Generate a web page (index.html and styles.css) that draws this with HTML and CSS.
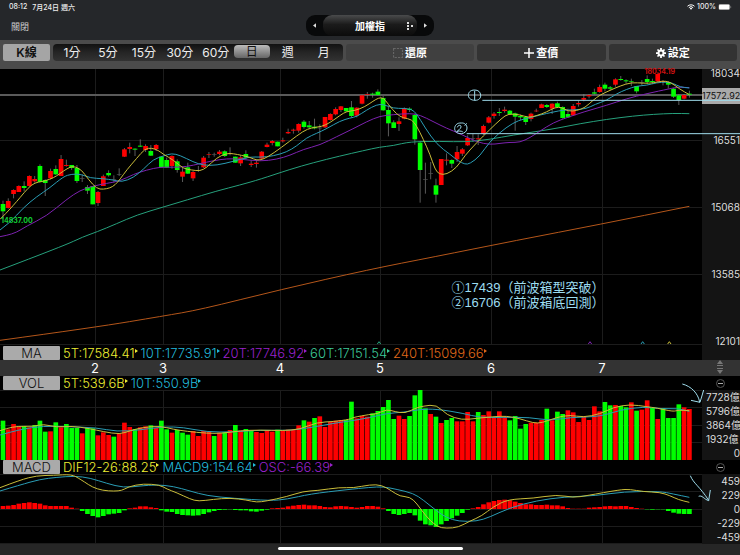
FILE: index.html
```html
<!DOCTYPE html>
<html lang="zh-Hant">
<head>
  <meta charset="UTF-8">
  <meta name="viewport" content="width=device-width, initial-scale=1.0">
  <title>加權指 K線</title>
  <link rel="stylesheet" href="styles.css">
</head>
<body>

  <!-- 狀態列 -->
  <div class="status-bar">
    <span>08:12</span>
    <span class="status-date">7月24日 週六</span>
    <svg class="wifi" viewBox="0 0 16 12"><path d="M1 4.5a10 10 0 0 1 14 0M3.7 7.3a6 6 0 0 1 8.6 0" fill="none" stroke="#fff" stroke-width="2"/><path d="M5.5 8.8a3.6 3.6 0 0 1 5 0L8 11.5z" fill="#fff"/></svg>
    <span>100%</span>
    <svg class="battery" viewBox="0 0 26 12"><rect x="0.5" y="0.5" width="22" height="11" rx="3" fill="none" stroke="#999"/><rect x="1" y="1" width="21" height="10" rx="2" fill="#fff"/><path d="M24 4v4q1.500-.5 1.500-2t-1.500-2" fill="#999"/></svg>
  </div>

  <!-- 標題 -->
  <header class="title-bar">
    <button class="close">關閉</button>
    <div class="picker">
      <button class="arrow" aria-label="上一檔"><svg viewBox="0 0 4 6"><path d="M4 0v6L0 3z"/></svg></button>
      <button class="symbol">加權指
        <svg viewBox="0 0 7 9"><path d="M0 0h2v2H0zM0 3h2v2H0zM0 6h2v2H0zM4 3h2v2H4z"/></svg>
      </button>
      <button class="arrow" aria-label="下一檔"><svg viewBox="0 0 4 6"><path d="M0 0v6l4-3z"/></svg></button>
    </div>
  </header>

  <!-- 工具列 -->
  <nav class="toolbar">
    <button class="kline">K線</button>
    <div class="periods">
      <button>1分</button>
      <button>5分</button>
      <button>15分</button>
      <button>30分</button>
      <button>60分</button>
      <button class="active">日</button>
      <button>週</button>
      <button>月</button>
    </div>
    <button class="tool dim"><svg viewBox="0 0 9 9"><path d="M.5.5h8v8h-8z" fill="none" stroke="#666" stroke-dasharray="2 1"/></svg>還原</button>
    <button class="tool"><svg viewBox="0 0 10 10"><path d="M5 0v10M0 5h10" stroke="#fff" stroke-width="1.500"/></svg>查價</button>
    <button class="tool"><svg viewBox="0 0 20 20"><circle cx="10" cy="10" r="5" fill="none" stroke="#fff" stroke-width="4"/><path d="M10 0v5M10 15v5M0 10h5M15 10h5M3 3l3.500 3.500M13.500 13.500L17 17M17 3l-3.500 3.500M6.500 13.500L3 17" stroke="#fff" stroke-width="3.500"/></svg>設定</button>
  </nav>

  <!-- K線圖 -->
  <section class="panel price">
    <div class="plot"><svg id="price-chart" viewBox="0 9 2106 828" preserveAspectRatio="none"></svg></div>
    <div class="axis">
      <span>18034</span><span>16551</span><span>15068</span><span>13585</span><span>12101</span>
    </div>
    <span class="low-label">14837.00</span>
    <span class="high-label">18034.19</span>
    <span class="last-price">17572.92</span>
    <svg class="drawing" viewBox="0 9 2220 828" preserveAspectRatio="none">
      <path d="M1447 103H2220M1400 203H2220"/>
      <path d="M1424 72c-14 0-19 8-19 16s8 15 20 15 18-7 17-16-7-15-18-15M1424 74v28"/>
      <path d="M1384 171c-14-1-20 8-20 17s9 16 20 15 17-8 17-17-7-16-17-15"/>
      <path d="M1372 184c2-8 12-8 11-1-1 6-9 10-13 14 6-3 13-2 18 0M1400 172l-6 7"/>
    </svg>
    <div class="note">①17439（前波箱型突破）<br>②16706（前波箱底回測）</div>
  </section>
  <div class="legend ma-legend">
    <button>MA</button>
    <span class="yellow">5T:17584.41</span>
    <span class="cyan">10T:17735.91</span>
    <span class="purple">20T:17746.92</span>
    <span class="green">60T:17151.54</span>
    <span class="orange">240T:15099.66</span>
  </div>

  <!-- 月份 -->
  <div class="months">
    <span></span><span>2</span><span>3</span><span>4</span><span>5</span><span>6</span><span>7</span>
    <svg viewBox="0 0 8 14"><path d="M4 0l3 4H1zM4 14l3-4H1zM1 5h6v1H1zM1 8h6v1H1z"/></svg>
  </div>

  <!-- 成交量 -->
  <section class="panel sub">
    <div class="legend">
      <button>VOL</button>
      <span class="yellow">5T:539.6B</span>
      <span class="cyan">10T:550.9B</span>
      <button class="collapse" aria-label="收合成交量"></button>
    </div>
    <div class="plot"><svg id="vol-chart" viewBox="0 150 2106 210" preserveAspectRatio="none"></svg></div>
    <div class="axis units">
      <span>7728億</span><span>5796億</span><span>3864億</span><span>1932億</span><span>0</span>
    </div>
    <svg class="drawing" viewBox="0 108 2220 252" preserveAspectRatio="none">
      <path d="M2047 132C2074 139 2094 160 2099 186M2073 181L2100 187L2111 150"/>
    </svg>
  </section>

  <!-- MACD -->
  <section class="panel sub">
    <div class="legend">
      <button>MACD</button>
      <span class="yellow">DIF12-26:88.25</span>
      <span class="cyan">MACD9:154.64</span>
      <span class="purple">OSC:-66.39</span>
      <button class="collapse" aria-label="收合MACD"></button>
    </div>
    <div class="plot"><svg id="macd-chart" viewBox="0 57 2106 210" preserveAspectRatio="none"></svg></div>
    <div class="axis">
      <span>459</span><span>229</span><span>0</span><span>-229</span><span>-459</span>
    </div>
    <svg class="drawing" viewBox="0 15 2220 252" preserveAspectRatio="none">
      <path d="M2071 62C2080 85 2100 95 2126 136M2096 124C2106 119 2112 133 2126 137L2131 105"/>
    </svg>
  </section>

  <footer class="home-bar"><span></span></footer>

  <script src="chart.js"></script>
</body>
</html>
```
FILE: styles.css
```css
* {
  box-sizing: border-box;
}
body {
  margin: 0;
  min-height: 100vh;
  background-color: #000;
  color: #eee;
  font-family: Inter, "Noto Sans CJK TC", sans-serif;
  display: flex;
  flex-direction: column;
  overflow-x: hidden;
}
button {
  font: inherit;
  color: inherit;
  border: none;
  padding: 0;
  margin: 0;
  background: none;
  cursor: pointer;
}
svg {
  display: block;
}
/* 狀態列 */
.status-bar {
  display: flex;
  align-items: center;
  height: 13px;
  padding: 0 8px 0 9px;
  background-color: #25272a;
  font-size: 7px;
  font-weight: 500;
}
.status-date {
  margin-left: 5px;
}
.wifi {
  width: 8px;
  height: 6px;
  margin-left: auto;
  margin-right: 2px;
}
.battery {
  width: 14px;
  height: 6px;
  margin-left: 2px;
}
/* 標題 */
.title-bar {
  position: relative;
  display: flex;
  justify-content: center;
  height: 27px;
  padding-top: 2px;
  background-color: #25272a;
}
.close {
  position: absolute;
  left: 11px;
  top: 7px;
  font-size: 9px;
  line-height: 14px;
  color: #ccc;
}
.picker {
  display: flex;
  height: 21px;
  border-radius: 9px;
  background-color: #08090a;
}
.arrow {
  width: 17px;
  display: flex;
  align-items: center;
  justify-content: center;
}
.arrow svg {
  width: 3px;
  height: 5px;
}
.picker svg {
  fill: #ddd;
}
.symbol {
  position: relative;
  width: 94px;
  border-radius: 9px;
  background: linear-gradient(#4a4b4c, #1b1b1b 45%, #0b0b0b);
  color: #fff;
  font-size: 10px;
  font-weight: bold;
}
.symbol svg {
  position: absolute;
  right: 3px;
  top: 7px;
  width: 7px;
  height: 9px;
}
/* 工具列 */
.toolbar {
  display: flex;
  gap: 3px;
  height: 29px;
  padding: 4px 3px 8px;
  background-color: #4b4b4b;
  font-size: 12px;
  line-height: 16px;
}
.kline {
  width: 47px;
  border-radius: 2px;
  background-color: #a5a5a5;
  color: #111;
  font-weight: 600;
}
.periods {
  display: flex;
  flex: 289;
  padding: 0 1px;
  border-radius: 4px;
  background: linear-gradient(#111, #252525 50%, #323232);
}
.periods button {
  flex: 1;
  min-width: 0;
}
.periods .active {
  height: 13px;
  margin-top: 1px;
  border-radius: 4px;
  background: linear-gradient(#bbb, #666);
  color: #111;
  line-height: 12px;
}
.tool {
  display: flex;
  flex: 129;
  align-items: center;
  justify-content: center;
  gap: 2px;
  border-radius: 3px;
  background-color: #333;
  color: #fff;
  font-size: 11px;
  font-weight: bold;
}
.tool.dim {
  background-color: #404040;
}
.tool svg {
  width: 10px;
  height: 10px;
}
/* 圖表 */
.panel {
  position: relative;
  display: grid;
  grid-template-columns: 1fr 38px;
}
.price {
  flex: 1 0 276px;
}
.plot {
  position: relative;
  min-height: 70px;
}
.plot svg {
  position: absolute;
  width: 100%;
  height: 100%;
}
.axis {
  display: flex;
  flex-direction: column;
  justify-content: space-between;
  align-items: flex-end;
  background-color: #141414;
  color: #ddd;
  font-size: 10px;
  line-height: 14px;
}
.price .axis {
  line-height: 8px;
}
.units {
  align-items: flex-start;
  padding-left: 4px;
  overflow: hidden;
  white-space: nowrap;
}
.units span:last-child {
  align-self: flex-end;
}
.last-price {
  position: absolute;
  right: 0;
  top: 19px;
  width: 38px;
  background-color: #aaa;
  color: #111;
  font-size: 9px;
  line-height: 16px;
  text-align: right;
  white-space: nowrap;
}
.low-label,
.high-label {
  position: absolute;
  font-size: 7px;
  font-weight: bold;
  line-height: 8px;
}
.low-label {
  left: 1px;
  top: 148px;
  color: #1c3;
}
.high-label {
  right: 65px;
  top: -1px;
  color: #c11;
}
.note {
  position: absolute;
  left: 61%;
  top: 211px;
  color: #9cdcf0;
  font-family: "Liberation Sans", "Noto Sans CJK TC", sans-serif;
  font-size: 13px;
  line-height: 15px;
  white-space: nowrap;
}
.drawing {
  position: absolute;
  width: 100%;
  height: 100%;
  fill: none;
  stroke: #9fdcec;
  pointer-events: none;
}
.drawing path,
.line {
  vector-effect: non-scaling-stroke;
}
.line {
  fill: none;
}
.grid {
  stroke: #1c1c1c;
  vector-effect: non-scaling-stroke;
  shape-rendering: crispEdges;
}
.wick {
  stroke: #888;
  stroke-width: 2;
}
.up {
  fill: #f00;
}
.down {
  fill: #0f0;
}
.flat {
  fill: #555;
}
.last-line {
  stroke: #5a5a5a;
  stroke-width: 2;
  vector-effect: non-scaling-stroke;
}
/* 指標列 */
.legend {
  display: flex;
  align-items: center;
  gap: 6px;
  height: 14px;
  padding-left: 3px;
  font-size: 13px;
  font-weight: 300;
  line-height: 14px;
  white-space: nowrap;
}
.legend button {
  width: 57px;
  margin-right: -3px;
  border-radius: 1px;
  background-color: #aaa;
  color: #111;
}
.legend span {
  position: relative;
}
.legend span::after {
  content: "";
  position: absolute;
  right: -3px;
  top: 3px;
  border: 2px solid transparent;
  border-left: 3px solid currentColor;
  border-right: none;
}
.ma-legend {
  height: 15px;
  background: linear-gradient(to left, #141414 38px, #000 38px);
}
.sub .legend {
  grid-column: 1 / 3;
}
.legend .collapse {
  width: 9px;
  height: 9px;
  margin-left: auto;
  margin-right: 15px;
  border: 1px solid #555;
  border-radius: 50%;
  background: linear-gradient(#aaa, #aaa) center / 5px 1px no-repeat;
}
.yellow { color: #ee3; }
.cyan { color: #2bd; }
.purple { color: #92c; }
.green { color: #3eca9a; }
.orange { color: #e0691a; }
/* 月份 */
.months {
  display: grid;
  grid-template-columns: 95fr 68fr 117fr 100fr 111fr 111fr 100fr 38px;
  height: 16px;
  background-color: #333;
  color: #fff;
  font-size: 13px;
  line-height: 16px;
}
.months span {
  width: 10px;
  margin-left: -5px;
  text-align: center;
}
.months svg {
  width: 8px;
  height: 14px;
  margin-left: 14px;
  fill: #777;
}
/* 底部 */
.home-bar {
  display: flex;
  justify-content: center;
  height: 11px;
  padding-top: 3px;
  background-color: #262626;
}
.home-bar span {
  width: 25%;
  height: 3px;
  border-radius: 2px;
  background-color: #fff;
}
```
FILE: chart.js
```js
const STEP = 15.84;
const FIRST = 9;
const monthLines = [286, 491, 841, 1141, 1474, 1807];

const COLORS = {
  yellow: '#c9bd3a',
  cyan: '#2a9db5',
  purple: '#7d22b0',
  green: '#26a07c',
  orange: '#b4561a'
};

// 每根K棒: 顏色, 實體上, 實體下, 最高, 最低
const candles = `G 414 436 404 458|R 405 426 397 428|R 372 384 370 397|R 360 378 358 378|G 360 366 346 376|R 330 360 328 362|R 339 346 330 350|G 300 348 295 348|G 342 351 340 390|R 315 337 308 340
G 309 325 298 327|R 279 330 267 330|R 297 300 281 302|G 297 306 297 312|G 306 345 297 351|N 337 338 325 348|G 363 374 357 384|G 360 415 360 415|R 378 411 375 420|R 331 360 326 360
G 321 328 313 332|N 340 341 328 350|N 325 326 307 330|R 250 272 246 273|R 243 249 230 262|G 248 251 247 270|G 239 242 220 243|R 240 252 235 258|G 255 269 237 270|R 237 249 234 255
G 272 304 272 304|G 282 305 275 306|R 270 300 268 308|G 286 312 280 320|R 317 332 305 348|G 304 323 290 324|R 318 337 315 345|N 312 313 300 318|R 275 304 270 306|R 265 267 258 276
N 265 266 260 272|R 257 264 252 268|G 256 270 253 273|R 262 264 244 268|G 272 290 272 290|R 274 292 268 300|G 264 275 253 280|R 293 297 283 303|R 290 294 280 305|R 257 278 255 280
R 236 243 230 244|R 225 231 222 238|G 227 241 227 241|R 223 226 215 230|R 198 202 188 204|R 191 194 188 203|R 174 194 172 200|G 167 183 162 188|G 178 184 165 188|G 182 187 158 190
N 185 187 175 222|R 153 184 153 186|R 144 162 142 164|R 129 145 124 148|R 121 132 120 138|G 126 136 126 138|G 124 150 105 154|R 125 149 124 154|R 88 113 86 115|R 85 87 78 98
G 83 86 80 95|G 77 87 70 88|G 96 133 90 134|G 132 172 118 211|G 169 186 163 186|R 166 174 154 195|R 126 158 124 160|G 128 132 124 138|G 147 220 143 236|G 230 312 225 410
N 340 341 290 383|N 322 323 288 340|G 358 386 338 410|R 279 357 279 357|R 281 284 262 298|G 282 293 280 306|R 258 280 240 288|R 250 263 246 270|R 216 238 208 240|N 216 217 203 228
R 217 220 205 237|R 180 204 176 207|R 154 170 150 172|R 143 150 138 158|G 138 141 126 150|R 131 135 122 140|G 134 144 132 146|G 142 152 140 194|G 150 154 146 162|G 153 168 150 177
R 143 159 140 166|R 134 136 128 138|R 115 126 113 126|G 117 123 114 126|R 113 128 112 144|G 112 123 107 126|G 123 156 121 158|G 144 154 128 156|R 120 148 114 150|R 111 115 104 122
R 96 101 84 106|R 87 91 85 97|G 79 83 68 86|R 63 78 56 80|G 56 68 50 76|G 64 68 60 73|R 40 56 37 62|G 39 42 30 44|G 43 46 40 53|G 45 47 38 60
G 60 76 60 82|N 48 50 42 60|G 39 48 28 54|G 45 48 38 54|R 24 46 22 48|R 45 48 42 58|G 48 56 45 68|G 68 92 66 96|G 88 102 85 117|R 87 98 84 100|G 83 86 74 95`;

const volumes = `G242 R268 R252 R260 G258 R262 G255 G242 G275 R274 G247 R262 G252 G264 G264 R280 G264 G265 R286 R277
R285 G290 R280 R248 R261 G267 R262 R259 G256 R264 G242 G268 R278 G270 G278 G284 R273 R288 R273 R274
G288 R278 G276 R270 G255 R272 G267 G273 R276 R279 R271 R275 G269 R272 R269 R268 R256 G241 R245 G234
R229 R261 R246 R242 R240 G240 G185 R235 R228 R230 G220 G213 G201 G180 G237 R227 R237 G228 G166 G150
G205 R222 G230 R249 G240 G234 R244 R244 R216 R244 G216 R225 R214 R233 R214 R230 G241 G228 G266 G252
R248 R248 R240 G206 R241 G215 G222 R211 R217 R246 R230 R240 R199 R214 G186 G196 R195 G198 G202 R187
G212 R209 R181 G204 R237 G204 G234 G234 G193 R202 R207`;

const osc = [9, 10, 12, 16, 18, 20, 18, 16, 11, 9, 9, 9, 9, 4, 1, -6, -15, -21, -25, -21, -16, -14, -12, -4, 2, 4, 8, 8, 5, 3,
  -4, -8, -9, -15, -18, -19, -20, -19, -15, -10, -6, -3, -2, -1, -3, -4, -4, -7, -8, -5, -2, 2, 3, 4, 8, 10, 12, 13, 11, 11,
  9, 6, 5, 8, 9, 8, 6, 4, 6, 9, 9, 7, 2, -6, -15, -18, -15, -12, -19, -35, -46, -49, -54, -46, -36, -28, -20, -12, -2, 2,
  6, 14, 20, 24, 27, 28, 26, 22, 18, 14, 14, 12, 12, 13, 11, 11, 8, 3, 1, 1, 1, 4, 5, 6, 8, 9, 8, 9, 9, 6,
  3, 1, -1, -2, -1, -1, -6, -11, -14, -15, -15];

const priceLines = {
  orange: '0,823 286,784 490,750 600,731 841,671 1110,610 1300,573 1550,523 1800,475 2068,421',
  green: '0,612 190,540 250,512 290,498 350,473 410,447 490,423 560,402 650,375 720,357 780,340 870,310 940,290 1020,270 1090,254 1140,243 1180,239 1230,227 1320,226 1400,228 1470,220 1540,207 1620,195 1680,185 1740,173 1820,160 1900,150 1960,145 2020,142 2068,143',
  purple: '0,512 40,505 80,480 140,450 200,400 240,373 280,360 320,352 360,345 400,325 440,312 480,303 520,304 560,302 600,293 640,284 680,278 720,279 780,286 830,280 870,268 910,250 960,237 1010,212 1060,188 1100,167 1140,150 1180,146 1230,142 1260,147 1300,167 1340,187 1380,203 1430,228 1470,236 1500,232 1530,229 1560,229 1590,215 1620,195 1660,170 1700,155 1750,138 1820,118 1880,98 1940,83 2010,68 2035,63 2068,65',
  cyan: '0,492 30,470 70,425 110,392 150,365 190,332 215,324 245,325 270,336 310,338 340,342 365,348 400,335 430,310 460,280 490,270 515,262 540,268 580,288 610,298 650,298 700,286 750,272 780,274 820,270 860,258 890,240 920,215 950,202 980,188 1020,165 1050,156 1070,152 1100,132 1130,116 1150,115 1180,127 1210,127 1235,130 1250,143 1275,185 1310,235 1350,265 1375,285 1395,295 1410,293 1440,270 1470,225 1520,183 1555,163 1590,155 1620,147 1660,138 1690,132 1720,132 1760,128 1785,115 1820,103 1850,83 1880,70 1910,60 1940,58 1970,50 2000,48 2020,52 2040,63 2068,66',
  yellow: '0,460 20,440 40,418 60,395 85,365 105,350 125,347 150,340 170,330 190,315 212,302 225,302 245,312 265,340 290,368 310,370 330,366 345,357 360,340 380,312 410,277 435,248 455,246 475,253 490,265 520,282 550,308 575,312 600,315 620,305 650,275 680,262 700,263 725,268 750,274 770,283 790,280 820,262 870,225 910,195 935,185 965,182 990,170 1020,148 1040,136 1065,134 1095,122 1120,105 1135,96 1150,95 1165,115 1190,145 1210,156 1235,160 1250,180 1270,220 1290,265 1305,310 1318,325 1340,325 1370,305 1395,268 1430,230 1470,190 1505,157 1525,143 1560,146 1585,155 1610,149 1640,138 1665,124 1685,124 1705,136 1730,134 1755,125 1780,102 1800,87 1830,73 1860,60 1895,49 1930,52 1960,51 1985,45 2010,47 2040,70 2068,86'
};

const volLines = {
  cyan: '0,285 60,268 130,258 200,260 290,263 350,275 420,270 490,260 550,262 620,276 700,276 780,270 860,272 920,265 1000,250 1050,243 1110,233 1160,220 1210,217 1260,208 1310,207 1390,220 1440,233 1510,232 1590,232 1650,242 1710,232 1800,230 1860,210 1930,200 1990,207 2030,205 2068,214',
  yellow: '0,272 40,258 100,260 130,252 170,262 215,258 270,266 310,275 360,283 390,272 430,262 480,258 520,268 560,274 620,280 670,280 720,272 780,270 850,272 900,268 950,247 1000,245 1050,238 1060,232 1110,223 1130,222 1160,208 1185,215 1215,220 1245,205 1270,198 1310,194 1340,225 1385,240 1430,235 1480,230 1520,228 1560,236 1600,249 1625,249 1670,232 1710,225 1750,232 1800,222 1840,202 1890,193 1940,200 1970,204 2020,215 2035,210 2068,212'
};

const macdLines = {
  cyan: '0,108 60,90 120,73 170,67 225,63 270,69 320,85 370,98 420,93 470,89 520,94 570,108 620,122 700,130 810,137 860,133 930,117 1040,104 1110,97 1150,95 1190,103 1240,115 1270,135 1310,168 1340,188 1375,199 1430,199 1470,186 1530,158 1610,137 1690,126 1790,122 1870,110 1980,109 2020,117 2068,127',
  yellow: '0,98 60,75 110,62 160,61 215,58 240,72 290,105 360,110 385,95 430,86 480,90 500,102 530,113 570,132 595,139 640,133 690,129 740,135 770,142 800,138 860,125 910,109 950,107 1020,97 1060,99 1110,89 1145,90 1175,108 1200,124 1230,126 1250,145 1275,180 1310,216 1340,220 1375,217 1410,198 1445,183 1480,155 1525,133 1600,130 1670,119 1720,128 1760,122 1860,104 1890,103 1930,110 1980,112 2010,122 2035,134 2068,142'
};

// 網格
function grid(rows, top, bottom) {
  return rows.map(y => `<path class="grid" d="M0 ${y}H2106"/>`).join('') +
    monthLines.map(x => `<path class="grid" d="M${x} ${top}V${bottom}"/>`).join('');
}

// 折線轉成平滑曲線
function smooth(points) {
  const p = points.split(' ').map(s => s.split(',').map(Number));
  let d = `M${p[0]}`;
  for (let i = 1; i < p.length - 1; i++) {
    d += `Q${p[i]} ${(p[i][0] + p[i + 1][0]) / 2},${(p[i][1] + p[i + 1][1]) / 2}`;
  }
  return d + `L${p[p.length - 1]}`;
}

function lines(set) {
  return Object.keys(set).map(k => `<path class="line" stroke="${COLORS[k]}" d="${smooth(set[k])}"/>`).join('');
}

function bar(i, top, height, type) {
  const cls = { R: 'up', G: 'down', N: 'flat' }[type];
  const x = (FIRST + STEP * i - 7).toFixed(1);
  return `<rect class="${cls}" x="${x}" y="${top}" width="14" height="${height}"/>`;
}

function drawPrice() {
  let out = grid([224, 424, 624, 836], 9, 837);
  out += '<path class="last-line" d="M0 87H2106"/>';
  candles.split(/[|\n]/).forEach((row, i) => {
    const [type, top, bottom, high, low] = row.split(' ');
    const x = (FIRST + STEP * i).toFixed(1);
    out += `<path class="wick" d="M${x} ${high}V${low}"/>`;
    out += bar(i, top, Math.max(bottom - top, 2), type);
  });
  out += lines(priceLines);
  // 均線轉折標記
  [['green', 1137], ['purple', 1770], ['cyan', 1928], ['yellow', 2008]].forEach(([c, x]) => {
    out += `<path class="line" stroke="${COLORS[c]}" d="M${x - 5} 834L${x} 827L${x + 5} 834"/>`;
  });
  document.getElementById('price-chart').innerHTML = out;
}

function drawVolume() {
  let out = grid([151, 203, 256, 308], 150, 360);
  volumes.split(/\s+/).forEach((v, i) => {
    const top = Number(v.slice(1));
    out += bar(i, top, 360 - top, v[0]);
  });
  document.getElementById('vol-chart').innerHTML = out + lines(volLines);
}

function drawMacd() {
  let out = grid([58, 109, 162, 214, 266], 57, 267);
  osc.forEach((v, i) => {
    out += bar(i, v > 0 ? 162 - v : 162, Math.abs(v), v > 0 ? 'R' : 'G');
  });
  document.getElementById('macd-chart').innerHTML = out + lines(macdLines);
}

drawPrice();
drawVolume();
drawMacd();
```
